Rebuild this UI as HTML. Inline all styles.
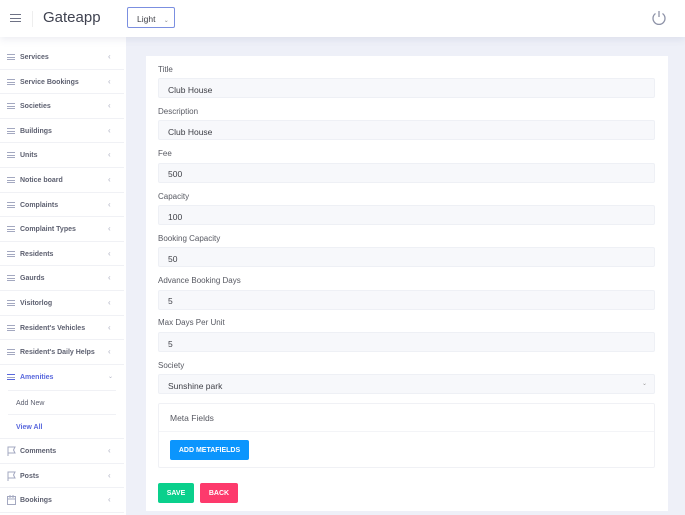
<!DOCTYPE html><html><head><style>
*{box-sizing:border-box;margin:0;padding:0}
body{width:685px;height:515px;overflow:hidden;background:#eef0f8;font-family:"Liberation Sans",sans-serif;position:relative;color:#3f4047}
.hdr{position:absolute;left:0;top:0;width:685px;height:37px;background:#fff;box-shadow:0 2px 8px rgba(80,90,140,.12);z-index:2}
.side{position:absolute;left:0;top:37px;width:126px;height:478px;background:#fff}
.it{position:absolute;left:0;width:124px;height:24.6px;border-bottom:1px solid #f0f1f5;font-size:7px;font-weight:bold;color:#5d6070}
.it span{position:absolute;left:20px;top:9px}
.ic{position:absolute;left:7px;top:9px;width:8px;height:6px;border-top:1px solid #a3a8c0;border-bottom:1px solid #a3a8c0}
.ic:after{content:"";position:absolute;left:0;top:2px;width:8px;border-top:1px solid #a3a8c0}
.ar{position:absolute;left:108px;top:7px;font-size:8px;color:#b0b3c3;font-weight:normal}
.card{position:absolute;left:146px;top:56px;width:522px;height:455px;background:#fff}
.lb{position:absolute;left:158px;font-size:8px;color:#575962}
.in{position:absolute;left:158px;width:497px;height:20px;background:#f7f8fb;border:1px solid #eef0f5;border-radius:2px;font-size:8.5px;padding:5.5px 0 0 9px;color:#3f4047}
.btn{position:absolute;color:#fff;font-size:7px;font-weight:bold;text-align:center;border-radius:2px}
</style></head><body>
<div class="hdr">
<div style="position:absolute;left:10px;top:14px;width:11px;height:8px;border-top:1.5px solid #6e7285;border-bottom:1.5px solid #6e7285"></div>
<div style="position:absolute;left:10px;top:17.5px;width:11px;border-top:1.5px solid #6e7285"></div>
<div style="position:absolute;left:32px;top:11px;height:16px;border-left:1px solid #eee"></div>
<div style="position:absolute;left:43px;top:9px;font-size:15px;color:#3f4250">Gateapp</div>
<div style="position:absolute;left:127px;top:7px;width:48px;height:21px;border:1px solid #7b8fe0;border-radius:2px;font-size:8.5px;padding:5.5px 0 0 9px;color:#3f4047">Light <span style="margin-left:6px;font-size:6px;color:#888">&#8964;</span></div>
<svg style="position:absolute;left:650px;top:9px" width="18" height="18" viewBox="0 0 18 18"><path d="M5.5 4.5A6 6 0 1 0 12.5 4.5" fill="none" stroke="#8e93a8" stroke-width="1.3"/><path d="M9 2v6" stroke="#8e93a8" stroke-width="1.3"/></svg>
</div>
<div class="side"></div>
<div class="it" style="top:45px"><i class="ic"></i><span>Services</span><b class="ar">&lsaquo;</b></div>
<div class="it" style="top:69.6px"><i class="ic"></i><span>Service Bookings</span><b class="ar">&lsaquo;</b></div>
<div class="it" style="top:94.2px"><i class="ic"></i><span>Societies</span><b class="ar">&lsaquo;</b></div>
<div class="it" style="top:118.8px"><i class="ic"></i><span>Buildings</span><b class="ar">&lsaquo;</b></div>
<div class="it" style="top:143.4px"><i class="ic"></i><span>Units</span><b class="ar">&lsaquo;</b></div>
<div class="it" style="top:168px"><i class="ic"></i><span>Notice board</span><b class="ar">&lsaquo;</b></div>
<div class="it" style="top:192.6px"><i class="ic"></i><span>Complaints</span><b class="ar">&lsaquo;</b></div>
<div class="it" style="top:217.2px"><i class="ic"></i><span>Complaint Types</span><b class="ar">&lsaquo;</b></div>
<div class="it" style="top:241.8px"><i class="ic"></i><span>Residents</span><b class="ar">&lsaquo;</b></div>
<div class="it" style="top:266.4px"><i class="ic"></i><span>Gaurds</span><b class="ar">&lsaquo;</b></div>
<div class="it" style="top:291px"><i class="ic"></i><span>Visitorlog</span><b class="ar">&lsaquo;</b></div>
<div class="it" style="top:315.6px"><i class="ic"></i><span>Resident's Vehicles</span><b class="ar">&lsaquo;</b></div>
<div class="it" style="top:340.2px"><i class="ic"></i><span>Resident's Daily Helps</span><b class="ar">&lsaquo;</b></div>
<div class="it" style="top:364.8px;color:#5867dd;border:none"><i class="ic" style="border-color:#5867dd"></i><span>Amenities</span><b class="ar" style="font-size:6px;top:8px">&#8964;</b></div>
<div class="it" style="top:390px;left:8px;width:108px;border-top:1px solid #f0f1f5;font-weight:normal;border-bottom:1px solid #f0f1f5"><span style="left:8px">Add New</span></div>
<div class="it" style="top:414.6px;color:#5867dd"><span style="left:16px">View All</span></div>
<div class="it" style="top:439.2px"><svg style="position:absolute;left:7px;top:7px" width="9" height="10"><path d="M1 10V1h7l-1.5 3L8 7H1" fill="none" stroke="#a3a8c0"/></svg><span>Comments</span><b class="ar">&lsaquo;</b></div>
<div class="it" style="top:463.8px"><svg style="position:absolute;left:7px;top:7px" width="9" height="10"><path d="M1 10V1h7l-1.5 3L8 7H1" fill="none" stroke="#a3a8c0"/></svg><span>Posts</span><b class="ar">&lsaquo;</b></div>
<div class="it" style="top:488.4px"><svg style="position:absolute;left:7px;top:7px" width="9" height="10"><rect x=".5" y="1.5" width="8" height="8" fill="none" stroke="#a3a8c0"/><path d="M.5 4h8M3 0v3M6 0v3" stroke="#a3a8c0"/></svg><span>Bookings</span><b class="ar">&lsaquo;</b></div>

<div class="card"></div>
<div class="lb" style="top:65px">Title</div><div class="in" style="top:78px">Club House</div>
<div class="lb" style="top:107px">Description</div><div class="in" style="top:120px">Club House</div>
<div class="lb" style="top:149px">Fee</div><div class="in" style="top:162.5px">500</div>
<div class="lb" style="top:192px">Capacity</div><div class="in" style="top:205px">100</div>
<div class="lb" style="top:234px">Booking Capacity</div><div class="in" style="top:247px">50</div>
<div class="lb" style="top:276px">Advance Booking Days</div><div class="in" style="top:289.5px">5</div>
<div class="lb" style="top:318px">Max Days Per Unit</div><div class="in" style="top:332px">5</div>
<div class="lb" style="top:361px">Society</div><div class="in" style="top:374px">Sunshine park<span style="position:absolute;right:7px;top:5px;font-size:6px;color:#999">&#8964;</span></div>
<div style="position:absolute;left:158px;top:403px;width:497px;height:65px;border:1px solid #f0f1f5;border-radius:2px"></div>
<div style="position:absolute;left:159px;top:431px;width:495px;border-top:1px solid #f3f4f7"></div>
<div class="lb" style="top:413px;left:170px;font-size:8.5px">Meta Fields</div>
<div class="btn" style="left:170px;top:440px;width:79px;height:20px;background:#0b95fd;padding-top:7px">ADD METAFIELDS</div>
<div class="btn" style="left:158px;top:483px;width:36px;height:20px;background:#0ad08c;padding-top:7px">SAVE</div>
<div class="btn" style="left:200px;top:483px;width:38px;height:20px;background:#fd3a6c;padding-top:7px">BACK</div>
</body></html>
